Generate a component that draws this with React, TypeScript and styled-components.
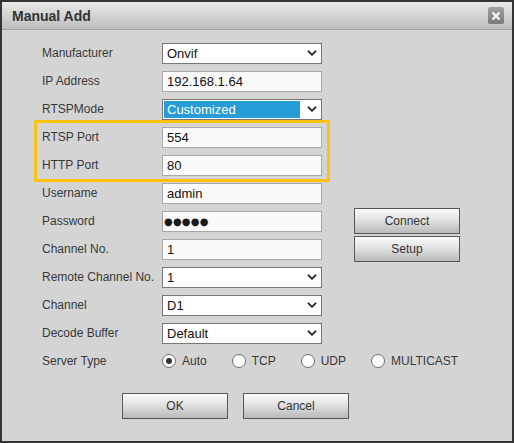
import React from 'react'
import styled, { createGlobalStyle } from 'styled-components'

const GlobalStyle = createGlobalStyle`
  html, body {
    margin: 0;
    padding: 0;
    background: #ffffff;
  }
  body {
    font-family: 'Liberation Sans', Arial, sans-serif;
  }
`

const Frame = styled.div`
  width: 514px;
  height: 443px;
  box-sizing: border-box;
  border: 2px solid #353535;
  background: #d4d4d4;
  display: flex;
  flex-direction: column;
`

const TitleBar = styled.div`
  height: 27px;
  flex-shrink: 0;
  display: flex;
  align-items: center;
  justify-content: space-between;
  padding: 0 8px 0 10px;
  background: linear-gradient(to bottom, #e9e9e9 0%, #d6d6d6 45%, #bcbcbc 100%);
  border-bottom: 1px solid #a3a3a3;
`

const Title = styled.span`
  font-size: 14px;
  font-weight: 700;
  color: #333333;
`

const CloseBtn = styled.div`
  width: 16px;
  height: 17px;
  border-radius: 2px;
  background: linear-gradient(to bottom, #a2a2a2, #7c7c7c);
  display: flex;
  align-items: center;
  justify-content: center;
`

const Body = styled.div`
  padding: 9px 0 0 40px;
`

const Row = styled.div`
  display: grid;
  grid-template-columns: 120px 160px 32px 106px;
  height: 28px;
  align-items: center;
`

const Label = styled.span`
  font-size: 12px;
  color: #383838;
`

const Highlight = styled.div`
  width: 280px;
  margin: -3px -8px;
  border: 3px solid #fdc20f;
  padding: 0 5px;
`

const TextBox = styled.div`
  height: 21px;
  box-sizing: border-box;
  border: 1px solid #a8a8a8;
  background: #fafafa;
  display: flex;
  align-items: center;
  padding: 0 4px;
  font-size: 13px;
  color: #111111;
`

const Dots = styled.span`
  margin-left: -3px;
  font-family: 'DejaVu Sans', sans-serif;
  font-size: 10px;
  letter-spacing: 0.2px;
  color: #1a1a1a;
`

const SelectBox = styled.div`
  height: 21px;
  box-sizing: border-box;
  border: 1px solid #777777;
  background: #ffffff;
  display: flex;
  align-items: center;
  padding: 1px 4px 1px 1px;
  font-size: 13px;
  color: #111111;
`

const SelectValue = styled.span<{ $active?: boolean }>`
  flex: 1;
  align-self: stretch;
  display: flex;
  align-items: center;
  padding-left: 3px;
  margin-right: 7px;
  background: ${({ $active }) => ($active ? '#279dd8' : 'transparent')};
  color: ${({ $active }) => ($active ? '#ffffff' : '#111111')};
`

const SideButton = styled.div`
  grid-column: 4;
  height: 26px;
  box-sizing: border-box;
  border: 1px solid #585858;
  background: linear-gradient(to bottom, #fbfbfb 0%, #e2e2e2 45%, #b9b9b9 100%);
  display: flex;
  align-items: center;
  justify-content: center;
  font-size: 12px;
  color: #333333;
`

const Radios = styled.div`
  grid-column: 2 / 5;
  display: flex;
  align-items: center;
  gap: 25px;
`

const RadioOption = styled.div`
  display: flex;
  align-items: center;
  gap: 6px;
  font-size: 12px;
  color: #383838;
`

const RadioCircle = styled.span<{ $checked?: boolean }>`
  width: 14px;
  height: 14px;
  box-sizing: border-box;
  border-radius: 50%;
  border: 1px solid #6e6e6e;
  background: #ffffff;
  display: flex;
  align-items: center;
  justify-content: center;

  &::after {
    content: '';
    width: 6px;
    height: 6px;
    border-radius: 50%;
    background: ${({ $checked }) => ($checked ? '#333333' : 'transparent')};
  }
`

const Footer = styled.div`
  display: flex;
  gap: 15px;
  padding-left: 80px;
  margin-top: 18px;
`

const FooterButton = styled(SideButton)`
  width: 106px;
`

const Chevron = () => (
  <svg width="10" height="6" viewBox="0 0 10 6">
    <polyline points="1,0.8 5,4.8 9,0.8" fill="none" stroke="#222" strokeWidth="1.8" />
  </svg>
)

const Select: React.FC<{ value: string; active?: boolean }> = ({ value, active }) => (
  <SelectBox>
    <SelectValue $active={active}>{value}</SelectValue>
    <Chevron />
  </SelectBox>
)

const serverTypes = ['Auto', 'TCP', 'UDP', 'MULTICAST']

export default function App() {
  return (
    <>
      <GlobalStyle />
      <Frame>
        <TitleBar>
          <Title>Manual Add</Title>
          <CloseBtn>
            <svg width="10" height="10" viewBox="0 0 10 10">
              <path d="M1.5 1.5 L8.5 8.5 M8.5 1.5 L1.5 8.5" stroke="#fff" strokeWidth="2" />
            </svg>
          </CloseBtn>
        </TitleBar>
        <Body>
          <Row>
            <Label>Manufacturer</Label>
            <Select value="Onvif" />
          </Row>
          <Row>
            <Label>IP Address</Label>
            <TextBox>192.168.1.64</TextBox>
          </Row>
          <Row>
            <Label>RTSPMode</Label>
            <Select value="Customized" active />
          </Row>
          <Highlight>
            <Row>
              <Label>RTSP Port</Label>
              <TextBox>554</TextBox>
            </Row>
            <Row>
              <Label>HTTP Port</Label>
              <TextBox>80</TextBox>
            </Row>
          </Highlight>
          <Row>
            <Label>Username</Label>
            <TextBox>admin</TextBox>
          </Row>
          <Row>
            <Label>Password</Label>
            <TextBox>
              <Dots>●●●●●</Dots>
            </TextBox>
            <SideButton>Connect</SideButton>
          </Row>
          <Row>
            <Label>Channel No.</Label>
            <TextBox>1</TextBox>
            <SideButton>Setup</SideButton>
          </Row>
          <Row>
            <Label>Remote Channel No.</Label>
            <Select value="1" />
          </Row>
          <Row>
            <Label>Channel</Label>
            <Select value="D1" />
          </Row>
          <Row>
            <Label>Decode Buffer</Label>
            <Select value="Default" />
          </Row>
          <Row>
            <Label>Server Type</Label>
            <Radios>
              {serverTypes.map((t) => (
                <RadioOption key={t}>
                  <RadioCircle $checked={t === 'Auto'} />
                  {t}
                </RadioOption>
              ))}
            </Radios>
          </Row>
          <Footer>
            <FooterButton>OK</FooterButton>
            <FooterButton>Cancel</FooterButton>
          </Footer>
        </Body>
      </Frame>
    </>
  )
}
